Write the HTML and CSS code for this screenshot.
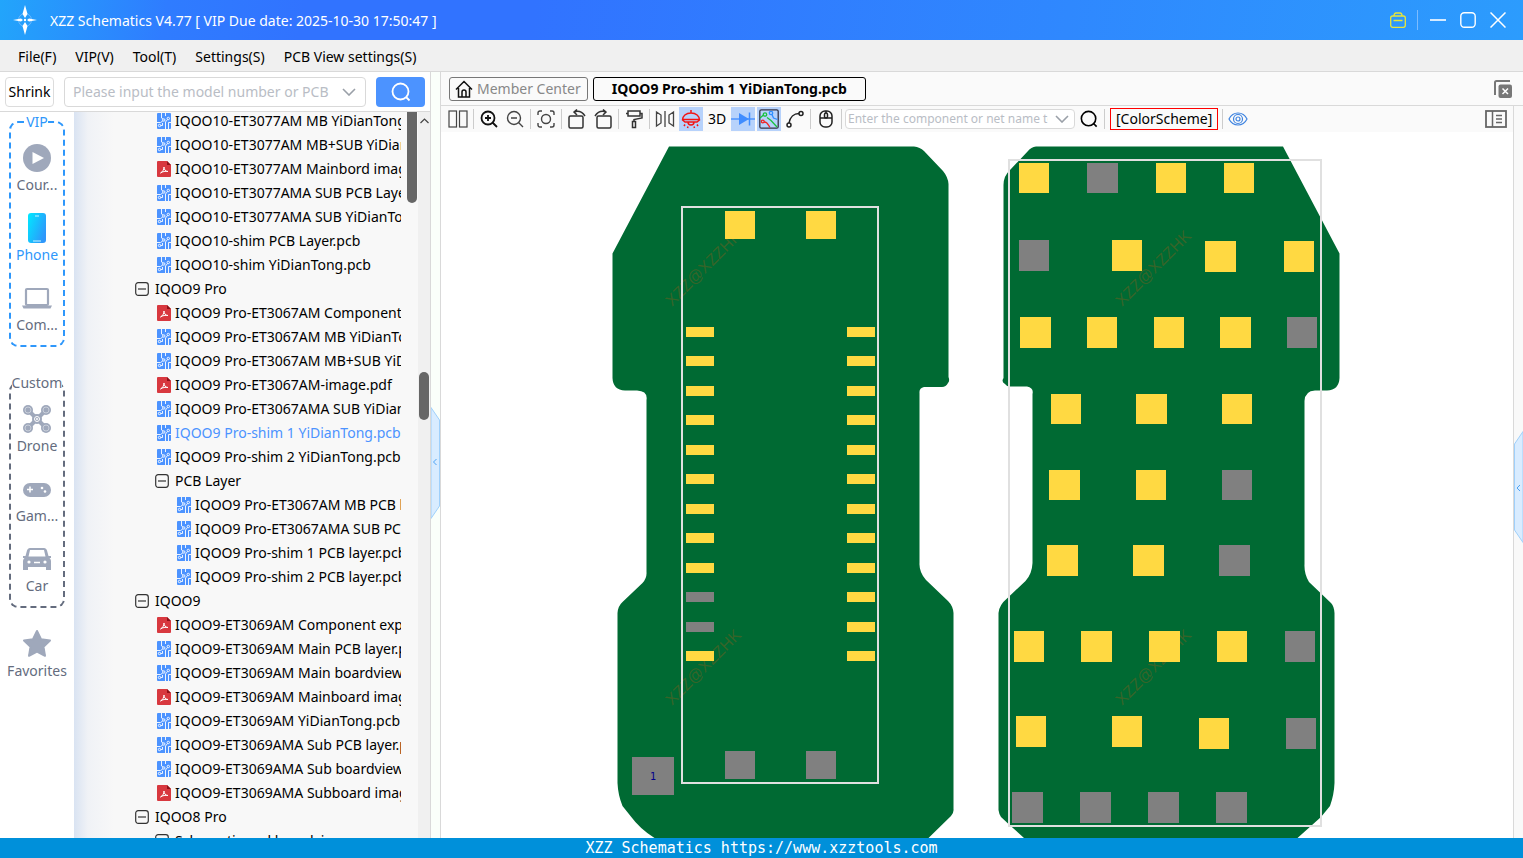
FILE: index.html
```html
<!DOCTYPE html>
<html lang="en">
    <head>
        <title>XZZ Schematics</title>
        <meta charset="utf-8">
        <meta name="viewport" content="width=device-width, initial-scale=1">
        <link rel="stylesheet" href="styles.css">
    </head>
    <body>
        <!-- shared icons -->
        <svg class="sprite" aria-hidden="true">
            <symbol id="pcb" viewBox="0 0 14 16">
                <rect width="14" height="16" rx="1" fill="#4c93ff"/>
                <g fill="none" stroke="#fff" stroke-width=".9">
                    <path d="M4.500 0v5l1.500 1M8.500 0v3M0 9.500h3.500L5.800 8M10.500 6.500L8.500 9v7M14 9.500h-2.500V16M3.700 12.500h1.800V10"/>
                    <circle cx="6.800" cy="7" r="1.200"/>
                    <circle cx="11.300" cy="5.500" r="1.200"/>
                    <circle cx="2.500" cy="12.500" r="1.200"/>
                </g>
            </symbol>
            <symbol id="pdf" viewBox="0 0 14 16">
                <path d="M1 0h9l4 4v11a1 1 0 0 1-1 1H1a1 1 0 0 1-1-1V1a1 1 0 0 1 1-1z" fill="#d8383f"/>
                <path d="M10 0l4 4h-4z" fill="#8e1219"/>
                <path d="M3.500 12c2-1 3.500-3.500 3.500-6 0 2.500 1.500 4.500 4 4.500-2.500-.5-5.500 0-7.500 1.500z" fill="none" stroke="#fff"/>
            </symbol>
            <symbol id="minus" viewBox="0 0 14 14">
                <rect x=".7" y=".7" width="12.600" height="12.600" rx="2.500" fill="none" stroke="#333" stroke-width="1.200"/>
                <path d="M3 7h8" stroke="#333" stroke-width="1.200"/>
            </symbol>
            <symbol id="chevron" viewBox="0 0 14 8">
                <path d="M1 1l6 6 6-6" fill="none" stroke="#9aa0a8" stroke-width="1.600"/>
            </symbol>
            <symbol id="loupe" viewBox="0 0 20 20">
                <circle cx="9.500" cy="9.500" r="8" fill="none" stroke="currentColor" stroke-width="1.800"/>
                <path d="M15 15l3.500 3.500" stroke="currentColor" stroke-width="1.800"/>
            </symbol>
        </svg>

        <header class="titlebar">
            <svg class="logo" width="24" height="30" viewBox="0 0 24 30">
                <circle cx="12" cy="15" r="6.500" fill="none" stroke="#8cc4ff" stroke-opacity=".7"/>
                <path d="M12 0l2.500 9-2.500 4-2.500-4zM12 30l2.500-9-2.500-4-2.500 4zM0 15l8-1.500 2 1.500-2 1.500zM24 15l-8-1.500-2 1.500 2 1.500z" fill="#fff"/>
                <circle cx="12" cy="15" r="1.200" fill="#fff"/>
            </svg>
            <h1 class="title">XZZ Schematics V4.77 [ VIP Due date: 2025-10-30 17:50:47 ]</h1>
            <button class="win-btn" aria-label="Toolbox">
                <svg width="16" height="16" viewBox="0 0 16 16" fill="none" stroke="#e8e63a" stroke-width="1.300">
                    <rect x=".7" y="4" width="14.600" height="11.300" rx="2"/>
                    <path d="M4 4c0-2 1-3 2-3h4c1 0 2 1 2 3M3.500 8.500h9"/>
                </svg>
            </button>
            <span class="win-sep"></span>
            <button class="win-btn" aria-label="Minimize">
                <svg width="16" height="16" viewBox="0 0 16 16"><path d="M0 8h16" stroke="#fff" stroke-width="1.600"/></svg>
            </button>
            <button class="win-btn" aria-label="Maximize">
                <svg width="16" height="16" viewBox="0 0 16 16"><rect x=".8" y=".8" width="14.400" height="14.400" rx="3.500" fill="none" stroke="#fff" stroke-width="1.400"/></svg>
            </button>
            <button class="win-btn" aria-label="Close">
                <svg width="16" height="16" viewBox="0 0 16 16"><path d="M.5.5l15 15M15.500.5l-15 15" stroke="#fff" stroke-width="1.500"/></svg>
            </button>
        </header>

        <nav class="menubar">
            <button>File(F)</button>
            <button>VIP(V)</button>
            <button>Tool(T)</button>
            <button>Settings(S)</button>
            <button>PCB View settings(S)</button>
        </nav>

        <div class="workspace">
            <aside class="side">
                <div class="side-search">
                    <button class="shrink">Shrink</button>
                    <div class="combo">
                        <input type="text" aria-label="Model number" placeholder="Please input the model number or PCB">
                        <button aria-label="Show history"><svg width="14" height="8"><use href="#chevron"/></svg></button>
                    </div>
                    <button class="search-btn" aria-label="Search"><svg width="20" height="20"><use href="#loupe"/></svg></button>
                </div>
                <div class="side-body">
                    <div class="rail">
                        <fieldset class="rail-group vip">
                            <legend>VIP</legend>
                            <button class="rail-item">
                                <svg width="30" height="30" viewBox="0 0 30 30"><circle cx="15" cy="15" r="14" fill="#9fa8bb"/><path d="M10.500 9l11.500 6-11.500 6z" fill="#fff"/></svg>
                                Cour...
                            </button>
                            <button class="rail-item active">
                                <svg width="30" height="30" viewBox="0 0 30 30">
                                    <defs><linearGradient id="ph" x1="0" x2="1" y1="0" y2=".6"><stop offset="0" stop-color="#00eaff"/><stop offset="1" stop-color="#2e97fb"/></linearGradient></defs>
                                    <rect x="6" y="0" width="18" height="30" rx="3" fill="url(#ph)"/>
                                    <path d="M13 3h4M11 28h8" stroke="#c8f4ff" stroke-width="1.200"/>
                                </svg>
                                Phone
                            </button>
                            <button class="rail-item">
                                <svg width="30" height="30" viewBox="0 0 30 30"><rect x="4" y="6" width="22" height="16" rx="1" fill="none" stroke="#9fa8bb" stroke-width="2.200"/><path d="M0 22.500h30l-1.500 3H1.500z" fill="#9fa8bb"/></svg>
                                Com...
                            </button>
                        </fieldset>
                        <fieldset class="rail-group custom">
                            <legend>Custom</legend>
                            <button class="rail-item">
                                <svg width="30" height="30" viewBox="0 0 30 30">
                                    <path d="M6 6l18 18M24 6L6 24" stroke="#9fa8bb" stroke-width="4"/>
                                    <g fill="#9fa8bb"><circle cx="6" cy="6" r="5"/><circle cx="24" cy="6" r="5"/><circle cx="6" cy="24" r="5"/><circle cx="24" cy="24" r="5"/><circle cx="15" cy="15" r="5"/></g>
                                    <g fill="none" stroke="#c9cfda"><circle cx="6" cy="6" r="3"/><circle cx="24" cy="6" r="3"/><circle cx="6" cy="24" r="3"/><circle cx="24" cy="24" r="3"/></g>
                                    <circle cx="15" cy="15" r="2.500" fill="none" stroke="#fff"/>
                                    <circle cx="15" cy="15" r="1" fill="#fff"/>
                                </svg>
                                Drone
                            </button>
                            <button class="rail-item">
                                <svg width="30" height="30" viewBox="0 0 30 30"><rect x="1" y="9" width="28" height="14" rx="7" fill="#9fa8bb"/><path d="M5 15.500h6M8 12.500v6" stroke="#fff" stroke-width="1.500"/><circle cx="20" cy="14" r="1.300" fill="#fff"/><circle cx="23" cy="17.500" r="1.300" fill="#fff"/></svg>
                                Gam...
                            </button>
                            <button class="rail-item">
                                <svg width="30" height="30" viewBox="0 0 30 30">
                                    <path d="M8 4h14c1.500 0 2.500 1 3 2.500L26.500 12h2.500v2h-1.500c1 1 1.500 2 1.500 3.500V26h-5v-3H6v3H1v-8.500C1 16 1.500 15 2.500 14H1v-2h2.500L5 6.500C5.500 5 6.500 4 8 4z" fill="#9fa8bb"/>
                                    <path d="M8 6h14l1.500 6.500h-17z" fill="#fff"/>
                                    <circle cx="7" cy="18" r="1.600" fill="#fff"/><circle cx="23" cy="18" r="1.600" fill="#fff"/><path d="M12 18.500h6" stroke="#fff" stroke-width="1.500"/>
                                </svg>
                                Car
                            </button>
                        </fieldset>
                        <button class="rail-item favorites">
                            <svg width="30" height="30" viewBox="0 0 30 30"><path d="M15 2l4 8.200 9 1.300-6.500 6.300 1.500 9L15 22.600 7 26.800l1.500-9L2 11.500l9-1.300z" fill="#9fa8bb" stroke="#9fa8bb" stroke-width="2" stroke-linejoin="round"/></svg>
                            Favorites
                        </button>
                    </div>

                    <div class="tree-pane">
                        <ul class="tree">
                            <li>
                                <ul>
                                    <li class="row"><svg class="file"><use href="#pcb"/></svg>IQOO10-ET3077AM MB YiDianTong.pcb</li>
                                    <li class="row"><svg class="file"><use href="#pcb"/></svg>IQOO10-ET3077AM MB+SUB YiDianTong.pcb</li>
                                    <li class="row"><svg class="file"><use href="#pdf"/></svg>IQOO10-ET3077AM Mainbord image.pdf</li>
                                    <li class="row"><svg class="file"><use href="#pcb"/></svg>IQOO10-ET3077AMA SUB PCB Layer.pcb</li>
                                    <li class="row"><svg class="file"><use href="#pcb"/></svg>IQOO10-ET3077AMA SUB YiDianTong.pcb</li>
                                    <li class="row"><svg class="file"><use href="#pcb"/></svg>IQOO10-shim PCB Layer.pcb</li>
                                    <li class="row"><svg class="file"><use href="#pcb"/></svg>IQOO10-shim YiDianTong.pcb</li>
                                </ul>
                            </li>
                            <li>
                                <div class="row"><svg class="toggle"><use href="#minus"/></svg>IQOO9 Pro</div>
                                <ul>
                                    <li class="row"><svg class="file"><use href="#pdf"/></svg>IQOO9 Pro-ET3067AM Component explorer.pdf</li>
                                    <li class="row"><svg class="file"><use href="#pcb"/></svg>IQOO9 Pro-ET3067AM MB YiDianTong.pcb</li>
                                    <li class="row"><svg class="file"><use href="#pcb"/></svg>IQOO9 Pro-ET3067AM MB+SUB YiDianTong.pcb</li>
                                    <li class="row"><svg class="file"><use href="#pdf"/></svg>IQOO9 Pro-ET3067AM-image.pdf</li>
                                    <li class="row"><svg class="file"><use href="#pcb"/></svg>IQOO9 Pro-ET3067AMA SUB YiDianTong.pcb</li>
                                    <li class="row selected"><svg class="file"><use href="#pcb"/></svg>IQOO9 Pro-shim 1 YiDianTong.pcb</li>
                                    <li class="row"><svg class="file"><use href="#pcb"/></svg>IQOO9 Pro-shim 2 YiDianTong.pcb</li>
                                    <li>
                                        <div class="row"><svg class="toggle"><use href="#minus"/></svg>PCB Layer</div>
                                        <ul>
                                            <li class="row"><svg class="file"><use href="#pcb"/></svg>IQOO9 Pro-ET3067AM MB PCB layer.pcb</li>
                                            <li class="row"><svg class="file"><use href="#pcb"/></svg>IQOO9 Pro-ET3067AMA SUB PCB layer.pcb</li>
                                            <li class="row"><svg class="file"><use href="#pcb"/></svg>IQOO9 Pro-shim 1 PCB layer.pcb</li>
                                            <li class="row"><svg class="file"><use href="#pcb"/></svg>IQOO9 Pro-shim 2 PCB layer.pcb</li>
                                        </ul>
                                    </li>
                                </ul>
                            </li>
                            <li>
                                <div class="row"><svg class="toggle"><use href="#minus"/></svg>IQOO9</div>
                                <ul>
                                    <li class="row"><svg class="file"><use href="#pdf"/></svg>IQOO9-ET3069AM Component explorer.pdf</li>
                                    <li class="row"><svg class="file"><use href="#pcb"/></svg>IQOO9-ET3069AM Main PCB layer.pcb</li>
                                    <li class="row"><svg class="file"><use href="#pcb"/></svg>IQOO9-ET3069AM Main boardview.pcb</li>
                                    <li class="row"><svg class="file"><use href="#pdf"/></svg>IQOO9-ET3069AM Mainboard image.pdf</li>
                                    <li class="row"><svg class="file"><use href="#pcb"/></svg>IQOO9-ET3069AM YiDianTong.pcb</li>
                                    <li class="row"><svg class="file"><use href="#pcb"/></svg>IQOO9-ET3069AMA Sub PCB layer.pcb</li>
                                    <li class="row"><svg class="file"><use href="#pcb"/></svg>IQOO9-ET3069AMA Sub boardview.pcb</li>
                                    <li class="row"><svg class="file"><use href="#pdf"/></svg>IQOO9-ET3069AMA Subboard image.pdf</li>
                                </ul>
                            </li>
                            <li>
                                <div class="row"><svg class="toggle"><use href="#minus"/></svg>IQOO8 Pro</div>
                                <ul>
                                    <li><div class="row"><svg class="toggle"><use href="#minus"/></svg>Schematic and boardview</div></li>
                                </ul>
                            </li>
                        </ul>
                        <div class="inner-scroll"><div class="inner-thumb"></div></div>
                        <div class="outer-scroll">
                            <svg width="9" height="6" viewBox="0 0 9 6"><path d="M.5 5l4-4 4 4" fill="none" stroke="#444" stroke-width="1.200"/></svg>
                            <div class="outer-thumb"></div>
                        </div>
                    </div>
                </div>
            </aside>

            <div class="splitter">
                <button class="handle" aria-label="Collapse left panel">
                    <svg width="9" height="112" viewBox="0 0 9 112"><path d="M0 .5L8.500 13v86L0 111.500z" fill="#d9ecff" stroke="#9fd0fb"/><path d="M5.500 52L2.500 55l3 3" fill="none" stroke="#4da3f5"/></svg>
                </button>
            </div>

            <main class="main">
                <div class="tabs">
                    <button class="tab home">
                        <svg width="18" height="18" viewBox="0 0 18 18" fill="none" stroke="#111" stroke-width="1.500"><path d="M1 9.500L9 1.500l8 8M3.500 8v9h11V8M7 17v-5a2 2 0 0 1 4 0v5"/></svg>
                        Member Center
                    </button>
                    <button class="tab current">IQOO9 Pro-shim 1 YiDianTong.pcb</button>
                    <button class="close-all" aria-label="Close all tabs">
                        <svg width="20" height="20" viewBox="0 0 20 20"><path d="M2 16V3.500a1.500 1.500 0 0 1 1.500-1.500H17" fill="none" stroke="#777" stroke-width="2"/><rect x="5.500" y="5.500" width="13.500" height="13.500" rx="2" fill="#777"/><path d="M9.500 9.500l5.500 5.500M15 9.500L9.500 15" stroke="#fff" stroke-width="1.500"/></svg>
                    </button>
                </div>

                <div class="view">
                    <div class="view-main">
                        <div class="toolbar">
                            <button class="tool" aria-label="Split view"><svg width="20" height="18" viewBox="0 0 20 18" fill="none" stroke="#444" stroke-width="1.200"><rect x="1" y="1" width="7.500" height="16"/><rect x="11.500" y="1" width="7.500" height="16"/></svg></button>
                            <span class="sep"></span>
                            <button class="tool" aria-label="Zoom in"><svg width="18" height="18" viewBox="0 0 18 18" fill="none" stroke="#111" stroke-width="1.800"><circle cx="8" cy="8" r="6.500"/><path d="M5 8h6M8 5v6M12.500 12.500L17 17"/></svg></button>
                            <button class="tool" aria-label="Zoom out"><svg width="18" height="18" viewBox="0 0 18 18" fill="none" stroke="#444" stroke-width="1.400"><circle cx="8" cy="8" r="6.500"/><path d="M5 8h6M12.500 12.500L17 17"/></svg></button>
                            <span class="sep"></span>
                            <button class="tool" aria-label="Fit to window"><svg width="18" height="18" viewBox="0 0 18 18" fill="none" stroke="#444" stroke-width="1.400"><path d="M1 5V3a2 2 0 0 1 2-2h2M13 1h2a2 2 0 0 1 2 2v2M17 13v2a2 2 0 0 1-2 2h-2M5 17H3a2 2 0 0 1-2-2v-2"/><circle cx="9" cy="9" r="4.500"/></svg></button>
                            <span class="sep"></span>
                            <button class="tool" aria-label="Rotate right"><svg width="20" height="20" viewBox="0 0 20 20" fill="none" stroke="#333" stroke-width="1.500"><rect x="2" y="7" width="14" height="12" rx="1.500"/><path d="M7 3c4-1.500 8-.5 11 4M10 .5L7 3l3 3"/></svg></button>
                            <button class="tool" aria-label="Rotate left"><svg width="20" height="20" viewBox="0 0 20 20" fill="none" stroke="#333" stroke-width="1.500"><rect x="4" y="7" width="14" height="12" rx="1.500"/><path d="M13 3C9 1.500 5 2.500 2 7M10 .5L13 3l-3 3"/></svg></button>
                            <span class="sep"></span>
                            <button class="tool" aria-label="Paint"><svg width="18" height="20" viewBox="0 0 18 20" fill="none" stroke="#333" stroke-width="1.500"><rect x="3" y="2" width="12" height="5"/><path d="M3 4.500H1M15 4.500h2V9l-8 1.500V13"/><rect x="7.500" y="12.500" width="3" height="6"/></svg></button>
                            <span class="sep"></span>
                            <button class="tool" aria-label="Mirror"><svg width="20" height="18" viewBox="0 0 20 18" fill="none" stroke="#444" stroke-width="1.300"><path d="M1.500 2l4.500 3v8l-4.500 3zM18.500 2L14 5v8l4.500 3zM10 1v16"/></svg></button>
                            <button class="tool on" aria-label="Light"><svg width="20" height="20" viewBox="0 0 20 20" fill="none" stroke="#f21414" stroke-width="1.500"><path d="M1.500 11c0-4 3.500-7 8.500-7s8.500 3 8.500 7l-2.500 2H4zM1.500 10.500h17M10 1v3M7 13a3 3 0 0 0 6 0M4 15.500L3 17M16 15.500l1 1.500M7 17.500l-.5 1.500M13 17.500l.5 1.500"/></svg></button>
                            <button class="tool">3D</button>
                            <button class="tool on" aria-label="Diode values"><svg width="24" height="16" viewBox="0 0 24 16"><path d="M0 8h24" stroke="#3f8cff" stroke-width="1.300"/><path d="M8 2l10 6-10 6z" fill="#3f8cff"/><path d="M18.500 1.500v13" stroke="#3f8cff" stroke-width="1.500"/></svg></button>
                            <button class="tool on" aria-label="Net colors"><svg width="20" height="20" viewBox="0 0 20 20" fill="none" stroke-width="1.300"><rect x=".8" y=".8" width="18.400" height="18.400" rx="1.500" stroke="#334"/><path d="M1 9l3.500-3M8 8.500l4 3 6 6.500" stroke="#19c23c"/><circle cx="6" cy="5.500" r="1.700" stroke="#19c23c"/><path d="M5 13c3 0 3 1 6 5.500" stroke="#f02525"/><circle cx="3.800" cy="12.500" r="1.400" stroke="#f02525"/><path d="M13 5.500l1.500 3.500 4 1.500" stroke="#2f8fff"/><circle cx="12" cy="4" r="1.700" stroke="#2f8fff"/></svg></button>
                            <button class="tool" aria-label="Connection line"><svg width="18" height="18" viewBox="0 0 18 18" fill="none" stroke="#222" stroke-width="1.500"><path d="M3 13C4 7 8 3.500 13 3.500"/><circle cx="3" cy="15" r="2"/><circle cx="15" cy="3.500" r="2"/></svg></button>
                            <span class="sep"></span>
                            <button class="tool" aria-label="Mouse settings"><svg width="14" height="18" viewBox="0 0 14 18" fill="none" stroke="#222" stroke-width="1.500"><rect x="1" y="1" width="12" height="16" rx="5"/><path d="M1 8h12M7 1v2"/><rect x="5.500" y="3" width="3" height="5" rx="1.500"/></svg></button>
                            <span class="sep"></span>
                            <div class="combo small">
                                <input type="text" aria-label="Component or net name" placeholder="Enter the component or net name to search">
                                <button aria-label="Show matches"><svg width="14" height="8"><use href="#chevron"/></svg></button>
                            </div>
                            <button class="tool" aria-label="Find"><svg width="18" height="18" viewBox="0 0 20 20"><use href="#loupe" width="20" height="20"/></svg></button>
                            <span class="sep"></span>
                            <button class="scheme">[ColorScheme]</button>
                            <span class="sep"></span>
                            <button class="tool" aria-label="Visibility"><svg width="20" height="16" viewBox="0 0 20 16" fill="none" stroke="#3f84e0" stroke-width="1.200"><path d="M1 8c4-8 14-8 18 0-4 8-14 8-18 0z"/><circle cx="10" cy="8" r="4.500"/><circle cx="10" cy="8" r="2"/></svg></button>
                            <button class="tool last" aria-label="Side panel"><svg width="22" height="18" viewBox="0 0 22 18" fill="none" stroke="#666"><rect x="1" y="1" width="20" height="16" stroke-width="1.800"/><path d="M7.500 1v16M11 5.500h6M11 9h6M11 12.500h6" stroke-width="1.500"/></svg></button>
                        </div>

                        <svg class="board" viewBox="441 132 1072 706">
                            <g fill="#006a33">
                                <path d="M669 146.500H914Q920 147 924 151L943 171Q948 177 948.500 184V377Q950 381 948 383Q946 387 942 387H924Q919 388 919.500 393V563Q919 572 926 580L948 601Q953 606 953.500 613V809Q954 813 951 816L928.500 838H654.500Q640 829 630.500 816L622.500 806Q618 795 617.500 783V613Q618 606 622.500 602L642.500 583Q647 578 646.500 572V400Q648 391 637 390.500H625Q613 390 612.500 378V253.500z"/>
                                <path d="M1283 146.500H1036Q1031 147 1028 151L1010 170Q1003.500 176 1003.500 185V378Q1001 382 1005 384Q1007 387 1011 386.500H1027Q1034 388 1032.500 394V563Q1032 574 1025.500 581L1007.500 598Q999 605 998.500 613V810Q999 814 1001 817L1008.500 824L1024 838H1297.500L1321 817L1330 806Q1334 795 1334.500 783V613Q1334 606 1331 603L1309 582Q1304 574 1304.500 564V401Q1305 391 1315 390.500H1327Q1339 390 1339.500 378V253.500z"/>
                            </g>
                            <g class="watermark">
                                <text transform="translate(672 307) rotate(-45)">XZZ@XZZHK</text>
                                <text transform="translate(672 706) rotate(-45)">XZZ@XZZHK</text>
                                <text transform="translate(1122 307) rotate(-45)">XZZ@XZZHK</text>
                                <text transform="translate(1122 706) rotate(-45)">XZZ@XZZHK</text>
                            </g>
                            <g fill="none" stroke="#e0e0e0" stroke-width="2">
                                <rect x="682" y="207" width="196" height="576"/>
                                <rect x="1009" y="160" width="312" height="666"/>
                            </g>
                            <!-- left board pads -->
                            <path fill="#ffd942" d="M725 211h30v28h-30zM806 211h30v28h-30z
                                M686 327h28v10h-28zM686 356h28v10h-28zM686 386h28v10h-28zM686 415h28v10h-28zM686 445h28v10h-28zM686 474h28v10h-28zM686 504h28v10h-28zM686 533h28v10h-28zM686 563h28v10h-28zM686 651h28v10h-28z
                                M847 327h28v10h-28zM847 356h28v10h-28zM847 386h28v10h-28zM847 415h28v10h-28zM847 445h28v10h-28zM847 474h28v10h-28zM847 504h28v10h-28zM847 533h28v10h-28zM847 563h28v10h-28zM847 592h28v10h-28zM847 622h28v10h-28zM847 651h28v10h-28z"/>
                            <path fill="#808080" d="M686 592h28v10h-28zM686 622h28v10h-28zM725 751h30v28h-30zM806 751h30v28h-30zM632 757h42v38h-42z"/>
                            <!-- right board pads -->
                            <path fill="#ffd942" d="M1019 163h30v30h-30zM1156 163h30v30h-30zM1224 163h30v30h-30z
                                M1112 240h30v31h-30zM1205 241h31v31h-31zM1284 241h30v31h-30z
                                M1020 317h31v31h-31zM1087 317h30v31h-30zM1154 317h30v31h-30zM1220 317h31v31h-31z
                                M1051 394h30v30h-30zM1136 394h31v30h-31zM1222 394h30v30h-30z
                                M1049 470h31v30h-31zM1136 470h30v30h-30z
                                M1047 545h31v31h-31zM1133 545h31v31h-31z
                                M1014 631h30v31h-30zM1081 631h31v31h-31zM1149 631h31v31h-31zM1217 631h30v31h-30z
                                M1016 716h30v31h-30zM1112 716h30v31h-30zM1199 718h30v31h-30z"/>
                            <path fill="#808080" d="M1087 163h31v30h-31zM1019 240h30v31h-30zM1287 317h30v31h-30zM1222 470h30v30h-30zM1219 545h31v31h-31zM1285 631h30v31h-30zM1286 718h30v31h-30z
                                M1012 792h31v31h-31zM1080 792h31v31h-31zM1148 792h31v31h-31zM1216 792h31v31h-31z"/>
                            <text class="pin" x="653" y="780">1</text>
                        </svg>
                    </div>
                    <div class="edge">
                        <button class="handle" aria-label="Expand right panel">
                            <svg width="9" height="112" viewBox="0 0 9 112"><path d="M9 .5L.5 13v86L9 111.500z" fill="#d9ecff" stroke="#9fd0fb"/><path d="M6 54L3 57l3 3" fill="none" stroke="#4da3f5"/></svg>
                        </button>
                    </div>
                </div>
            </main>
        </div>

        <footer class="statusbar">XZZ Schematics https://www.xzztools.com</footer>
    </body>
</html>
```

FILE: styles.css
```css
*
{
    box-sizing: border-box;
}
body
{
    margin: 0;
    height: 100vh;
    display: flex;
    flex-direction: column;
    overflow: hidden;
    font: 14px/20px "Noto Sans", "Open Sans", sans-serif;
    color: #000;
    background: #fff;
}
button
{
    margin: 0;
    padding: 0;
    border: 0;
    background: none;
    font: inherit;
    color: inherit;
    white-space: nowrap;
}
svg
{
    display: block;
    flex: none;
}
ul
{
    list-style: none;
    margin: 0;
    padding: 0;
}
.sprite
{
    position: absolute;
    width: 0;
    height: 0;
}

/* title bar */
.titlebar
{
    flex: none;
    height: 40px;
    display: flex;
    align-items: center;
    padding: 0 17px 0 13px;
    color: #fff;
    background: linear-gradient(100deg, #22a5fb 0%, #2f7cff 11%, #3173ff 20%, #3173ff 35%, #2f88fe 70%, #2c9cfd 100%);
}
.title
{
    flex: 1;
    margin: 0 0 0 13px;
    padding-top: 1px;
    font-size: 14px;
    font-weight: normal;
}
.win-btn
{
    margin-left: 14px;
}
.win-sep
{
    width: 1px;
    height: 20px;
    margin: 0 -2px 0 11px;
    background: #7cbcff;
}

/* menu */
.menubar
{
    flex: none;
    height: 32px;
    display: flex;
    align-items: center;
    gap: 19px;
    padding: 2px 18px 0;
    background: #f0f0f0;
    border-bottom: 1px solid #d9d9d9;
}
.workspace
{
    flex: 1;
    min-height: 0;
    display: flex;
}

/* left side */
.side
{
    flex: none;
    width: 431px;
    display: flex;
    flex-direction: column;
    border-right: 1px solid #d9d9d9;
}
.side-search
{
    flex: none;
    height: 40px;
    display: flex;
    align-items: center;
    gap: 10px;
    padding: 0 5px;
    border-bottom: 1px solid #d9d9d9;
}
.shrink
{
    width: 49px;
    height: 30px;
    border: 1px solid #dcdcdc;
    border-radius: 4px;
}
.combo
{
    flex: 1;
    height: 30px;
    display: flex;
    align-items: center;
    padding: 0 9px 0 8px;
    background: #fff;
    border: 1px solid #d9d9d9;
    border-radius: 4px;
}
.combo input
{
    flex: 1;
    min-width: 0;
    padding: 0;
    margin-right: 7px;
    border: 0;
    outline: 0;
    font: inherit;
    background: none;
}
.combo input::placeholder
{
    color: #b9bdc5;
}
.search-btn
{
    width: 49px;
    height: 30px;
    display: flex;
    align-items: center;
    justify-content: center;
    color: #fff;
    background: #4c93ff;
    border-radius: 4px;
}
.side-body
{
    flex: 1;
    min-height: 0;
    display: flex;
}

/* category rail */
.rail
{
    flex: none;
    width: 74px;
    color: #646c7e;
}
.rail-group
{
    width: 56px;
    margin: 0 0 26px 9px;
    padding: 3px 0 0;
    border: 2px dashed #646c7e;
    border-radius: 9px;
}
.rail-group legend
{
    margin: 0 auto;
    padding: 0;
    line-height: 20px;
}
.vip
{
    border-color: #2e97fb;
}
.vip legend,
.rail-item.active
{
    color: #2e97fb;
}
.rail-item
{
    width: 100%;
    height: 70px;
    padding-top: 8px;
    display: flex;
    flex-direction: column;
    align-items: center;
    gap: 2px;
}
.favorites
{
    margin-top: -13px;
}

/* file tree */
.tree-pane
{
    flex: 1;
    min-width: 0;
    display: flex;
    background: linear-gradient(90deg, #d9e3f2 0, #f0f2f6 14px, #f8f8f8 40px);
    overflow: hidden;
}
.tree
{
    flex: 1;
    min-width: 0;
    margin-top: -3px;
    padding-left: 61px;
    overflow: hidden;
}
.tree ul
{
    padding-left: 20px;
}
.row
{
    height: 24px;
    display: flex;
    align-items: center;
    white-space: nowrap;
}
.row.selected
{
    color: #4c93ff;
}
.file
{
    width: 14px;
    height: 16px;
    margin: 0 4px 0 2px;
}
.toggle
{
    width: 14px;
    height: 14px;
    margin-right: 6px;
}
.inner-scroll
{
    flex: none;
    width: 17px;
    padding: 0 1px 0 6px;
}
.inner-thumb
{
    height: 91px;
    background: #666;
    border-radius: 0 0 5px 5px;
}
.outer-scroll
{
    flex: none;
    width: 12px;
    padding-top: 6px;
    display: flex;
    flex-direction: column;
    align-items: center;
    background: #f0f0f0;
}
.outer-thumb
{
    width: 10px;
    height: 48px;
    margin-top: 248px;
    background: #666;
    border-radius: 5px;
}

.splitter
{
    flex: none;
    width: 10px;
    display: flex;
    align-items: center;
    padding-top: 16px;
    background: #fafffa;
    border-right: 1px solid #d9d9d9;
}

/* tabs */
.main
{
    flex: 1;
    min-width: 0;
    display: flex;
    flex-direction: column;
}
.tabs
{
    flex: none;
    height: 34px;
    display: flex;
    align-items: center;
    gap: 5px;
    padding: 0 10px 0 8px;
    background: #fafafa;
    border-bottom: 1px solid #d9d9d9;
}
.tab
{
    height: 24px;
    display: flex;
    align-items: center;
    justify-content: center;
    gap: 4px;
    padding: 0 6px 0 5px;
    border: 1px solid #777;
    border-radius: 3px;
}
.tab.home
{
    color: #888;
}
.tab.current
{
    padding: 0 18px;
    font-weight: bold;
    border-color: #000;
}
.close-all
{
    margin-left: auto;
}

/* toolbar */
.view
{
    flex: 1;
    min-height: 0;
    display: flex;
}
.view-main
{
    flex: 1;
    min-width: 0;
    display: flex;
    flex-direction: column;
}
.toolbar
{
    flex: none;
    height: 26px;
    display: flex;
    align-items: center;
    gap: 2px;
    padding: 0 5px;
    background: #fafafa;
}
.tool
{
    flex: none;
    width: 24px;
    height: 24px;
    display: flex;
    align-items: center;
    justify-content: center;
}
.tool.on
{
    background: #b7d2fb;
}
.tool.last
{
    margin-left: auto;
}
.sep
{
    width: 1px;
    height: 20px;
    margin: 0 1px;
    background: #ccc;
}
.combo.small
{
    flex: none;
    width: 230px;
    height: 20px;
    padding: 0 5px 0 2px;
    font-size: 12px;
}
.scheme
{
    height: 22px;
    margin: 0 1px 0 2px;
    padding: 0 5px;
    border: 1px solid #f00;
}

/* board view */
.board
{
    flex: 1;
    width: 100%;
    min-height: 0;
    background: #fff;
}
.watermark
{
    font: 16px "Liberation Sans", sans-serif;
    fill: #a05a14;
    fill-opacity: .35;
}
.pin
{
    font: 10px "DejaVu Sans Mono", monospace;
    fill: #00008b;
    text-anchor: middle;
}
.edge
{
    flex: none;
    width: 10px;
    display: flex;
    align-items: center;
    padding-top: 30px;
    background: #f9f9f9;
    border-left: 1px solid #d9d9d9;
}

.statusbar
{
    flex: none;
    height: 20px;
    font: 15px/20px "DejaVu Sans Mono", monospace;
    text-align: center;
    color: #fff;
    background: #0090da;
}
```
